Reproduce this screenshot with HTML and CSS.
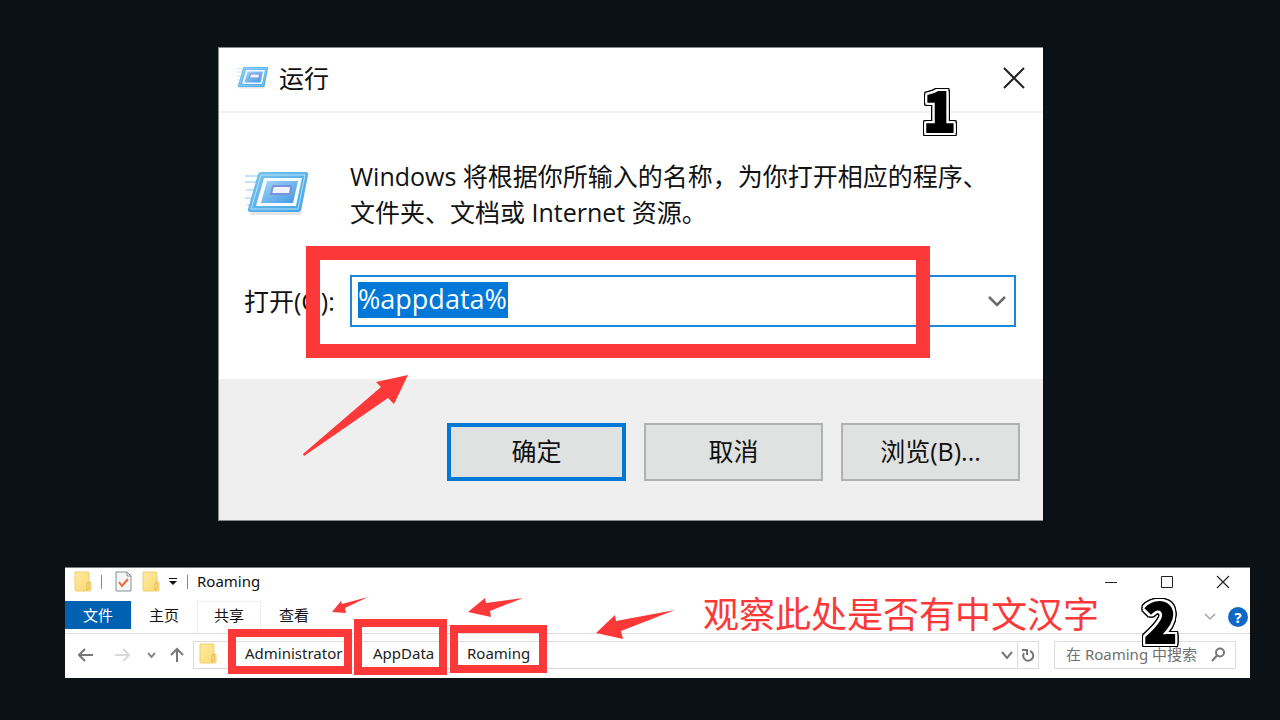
FILE: index.html
```html
<!DOCTYPE html>
<html lang="zh-CN">
<head>
<meta charset="utf-8">
<title>运行 %appdata%</title>
<link rel="stylesheet" href="styles.css">
</head>
<body>
<svg class="defs" width="0" height="0" aria-hidden="true">
  <defs>
    <linearGradient id="runFrame" x1="0" y1="0" x2="1" y2="1">
      <stop offset="0" stop-color="#7cc4ec"/>
      <stop offset="1" stop-color="#3fa3ea"/>
    </linearGradient>
    <linearGradient id="runCore" x1="0" y1="0" x2="1" y2="1">
      <stop offset="0" stop-color="#a5d5f3"/>
      <stop offset="1" stop-color="#3f97e6"/>
    </linearGradient>
    <linearGradient id="folderFill" x1="0" y1="0" x2="1" y2="1">
      <stop offset="0" stop-color="#ffeaa2"/>
      <stop offset="1" stop-color="#fbd96f"/>
    </linearGradient>
    <symbol id="run" viewBox="0 0 68 52">
      <path d="M1 8h14M1 14h12M2 22h9M1 30h8M3 37h4" stroke="#8fcbf0" stroke-width="2" opacity=".5"/>
      <path d="M18 7h46l-7 40H6z" fill="#000" opacity=".1"/>
      <path d="M17 4h45q3 0 2 3l-7 35q-1 2-3 2H6q-3 0-2-3L14 6q1-2 3-2z" fill="url(#runFrame)"/>
      <path d="M17 7h44l-7 34H7z" fill="none" stroke="#b5e2fa" stroke-width="1"/>
      <path d="M20 10h38l-6 28H12z" fill="#f5fbff"/>
      <path d="M23 13h31l-5 22H17z" fill="url(#runCore)"/>
      <path d="M29 18h18l-1 8H27z" fill="#f0f3ff" stroke="#7c91dc" stroke-width="2" stroke-linejoin="round"/>
    </symbol>
    <symbol id="folder" viewBox="0 0 18 21">
      <path d="M1 1h13q1 0 1 1v9h1q1 0 1 1v7q0 1-1 1H2q-1 0-1-1z" fill="url(#folderFill)" stroke="#f0cf70" stroke-width="1"/>
      <path d="M13 19v-6q0-2 2-2v6z" fill="#fff0b8" stroke="#dfb650" stroke-width="1"/>
    </symbol>
  </defs>
</svg>
<main class="stage">
  <section class="dialog">
    <header class="dialog-title">
      <svg class="title-icon"><use href="#run"/></svg>
      <h1 class="dialog-name">运行</h1>
      <button class="close" type="button" aria-label="关闭">
        <svg width="24" height="24" viewBox="0 0 24 24"><path d="M2 2l20 20M22 2L2 22" stroke="#222" stroke-width="2"/></svg>
      </button>
    </header>
    <form class="run-form">
      <div class="dialog-body">
        <svg class="run-icon"><use href="#run"/></svg>
        <p class="message">Windows 将根据你所输入的名称，为你打开相应的程序、<br>文件夹、文档或 Internet 资源。</p>
        <label class="open-label" for="open">打开(O):</label>
        <div class="combo">
          <input class="combo-input" id="open" type="text" value="%appdata%">
          <button class="combo-toggle" type="button" aria-label="展开列表">
            <svg width="20" height="14" viewBox="0 0 20 14"><path d="M2 3l8 8 8-8" fill="none" stroke="#6b6b6b" stroke-width="2.500"/></svg>
          </button>
        </div>
      </div>
      <div class="dialog-actions">
        <button class="action action-default" type="button">确定</button>
        <button class="action" type="button">取消</button>
        <button class="action" type="button">浏览(B)...</button>
      </div>
    </form>
    <div class="mark mark-input"></div>
    <svg class="arrow-dialog" width="110" height="86" viewBox="0 0 110 86"><path d="M106 1L74 8l5 5L1 80l1 2 84-58 6 6z" fill="#fd3838"/></svg>
    <span class="step step-one">1</span>
  </section>

  <section class="explorer">
    <header class="explorer-title">
      <svg class="folder"><use href="#folder"/></svg>
      <span class="divider"></span>
      <svg class="sheet" width="17" height="21" viewBox="0 0 17 21">
        <path d="M1 1h11l4 4v15H1z" fill="#f4f6f8" stroke="#8a8d91"/>
        <path d="M12 1v4h4" fill="none" stroke="#8a8d91"/>
        <path d="M4 11l3 4 6-7" fill="none" stroke="#ee6a35" stroke-width="2"/>
      </svg>
      <svg class="folder"><use href="#folder"/></svg>
      <svg class="quick" width="10" height="9" viewBox="0 0 10 9"><path d="M1 1.500h8" stroke="#111" stroke-width="1"/><path d="M1 4h8L5 8z" fill="#111"/></svg>
      <span class="divider"></span>
      <h2 class="explorer-name">Roaming</h2>
      <div class="window-buttons">
        <button class="plain" type="button" aria-label="最小化"><svg width="14" height="14" viewBox="0 0 14 14"><path d="M1 7.500h12" stroke="#222"/></svg></button>
        <button class="plain" type="button" aria-label="最大化"><svg width="14" height="14" viewBox="0 0 14 14"><path d="M1.500 1.500h11v11h-11z" fill="none" stroke="#222"/></svg></button>
        <button class="plain" type="button" aria-label="关闭"><svg width="14" height="14" viewBox="0 0 14 14"><path d="M1 1l12 12M13 1L1 13" stroke="#222" stroke-width="1.200"/></svg></button>
      </div>
    </header>
    <nav class="tabs">
      <button class="tab tab-file" type="button">文件</button>
      <button class="tab" type="button">主页</button>
      <button class="tab tab-hover" type="button">共享</button>
      <button class="tab" type="button">查看</button>
      <div class="tab-tools">
        <button class="plain" type="button" aria-label="展开功能区"><svg width="12" height="8" viewBox="0 0 12 8"><path d="M1 1l5 5 5-5" fill="none" stroke="#a4a4a4" stroke-width="1.500"/></svg></button>
        <button class="help" type="button" aria-label="帮助">?</button>
      </div>
    </nav>
    <div class="address-row">
      <div class="history">
        <button class="plain" type="button" aria-label="后退"><svg width="16" height="14" viewBox="0 0 16 14"><path d="M15 7H2M7 1L1 7l6 6" fill="none" stroke="#777" stroke-width="2"/></svg></button>
        <button class="plain" type="button" aria-label="前进"><svg width="16" height="14" viewBox="0 0 16 14"><path d="M1 7h13M9 1l6 6-6 6" fill="none" stroke="#d9d9d9" stroke-width="2"/></svg></button>
        <button class="plain plain-small" type="button" aria-label="最近位置"><svg width="9" height="7" viewBox="0 0 9 7"><path d="M1 1l3.500 4L8 1" fill="none" stroke="#888" stroke-width="2"/></svg></button>
        <button class="plain" type="button" aria-label="上移"><svg width="16" height="16" viewBox="0 0 16 16"><path d="M8 15V2M2 8l6-6 6 6" fill="none" stroke="#777" stroke-width="2"/></svg></button>
      </div>
      <div class="address">
        <svg class="folder"><use href="#folder"/></svg>
        <a class="crumb crumb-user" href="#admin">Administrator</a>
        <a class="crumb crumb-data" href="#appdata">AppData</a>
        <a class="crumb" href="#roaming">Roaming</a>
        <button class="plain address-open" type="button" aria-label="历史地址"><svg width="12" height="9" viewBox="0 0 12 9"><path d="M1 1l5 6 5-6" fill="none" stroke="#777" stroke-width="2"/></svg></button>
        <button class="refresh" type="button" aria-label="刷新"><svg width="14" height="15" viewBox="0 0 14 15"><path d="M9 3a5 5 0 1 1-6 2" fill="none" stroke="#777" stroke-width="2"/><path d="M1 2h5v5" fill="none" stroke="#777" stroke-width="2"/></svg></button>
      </div>
      <label class="search">
        <input class="search-input" type="text" placeholder="在 Roaming 中搜索" aria-label="搜索">
        <svg width="15" height="15" viewBox="0 0 15 15"><circle cx="9" cy="5.500" r="4" fill="none" stroke="#777" stroke-width="2"/><path d="M6 8.500L1 14" stroke="#777" stroke-width="2"/></svg>
      </label>
    </div>
    <div class="mark mark-user"></div>
    <div class="mark mark-data"></div>
    <div class="mark mark-roaming"></div>
    <svg class="arrows" width="346" height="46" viewBox="0 0 346 46" fill="#fd3838">
      <path d="M1 15L10 4l1 3 26-7-23 11 1 5z"/>
      <path d="M137 15l17-14 1 5 37-5-33 13 1 6z"/>
      <path d="M265 36l19-18 1 6 59-11-54 21 2 8z"/>
    </svg>
    <p class="note">观察此处是否有中文汉字</p>
    <span class="step step-two">2</span>
  </section>
</main>
</body>
</html>
```

FILE: styles.css
```css
* {
  box-sizing: border-box;
}

body {
  margin: 0;
  background: #0b1114;
  color: #111;
  font-family: "Noto Sans", "Noto Sans CJK SC", sans-serif;
}

button,
input {
  font: inherit;
  color: inherit;
  border: 0;
  margin: 0;
  padding: 0;
  background: none;
}

h1,
h2,
p {
  margin: 0;
  font-weight: 400;
}

.defs {
  position: absolute;
}

.stage {
  display: flex;
  flex-direction: column;
  gap: 46px;
  padding: 47px 30px 42px 65px;
}

/* Run dialog */
.dialog {
  position: relative;
  margin: 0 207px 0 153px;
  border: 1px solid #858a8c;
  border-right: 0;
  background: #fff;
  font-family: "Open Sans", "Noto Sans CJK SC", sans-serif;
  font-size: 25px;
  line-height: 36px;
}

.dialog-title {
  display: flex;
  align-items: center;
  height: 65px;
  padding: 0 17px 4px;
  border-bottom: 2px solid #f2f2f2;
}

.title-icon {
  width: 34px;
  height: 26px;
}

.dialog-name {
  margin-left: 9px;
  font-size: 25px;
}

.close {
  display: flex;
  margin-left: auto;
}

.dialog-body {
  display: grid;
  grid-template-columns: 106px 1fr;
  row-gap: 45px;
  align-items: center;
  padding: 45px 27px 52px 25px;
}

.run-icon {
  width: 68px;
  height: 52px;
}

.message {
  white-space: nowrap;
}

.combo {
  display: flex;
  align-items: center;
  height: 52px;
  padding: 0 7px 3px 6px;
  border: 2px solid #1c87dc;
}

.combo-input {
  width: 150px;
  height: 36px;
  padding: 0 0 2px;
  background: #0078d7;
  color: #fff;
  font-size: 27px;
}

.combo-toggle {
  display: flex;
  margin-left: auto;
  padding-top: 3px;
}

.dialog-actions {
  display: flex;
  justify-content: flex-end;
  gap: 18px;
  padding: 44px 23px 39px;
  background: #efefef;
}

.action {
  width: 179px;
  height: 58px;
  padding-bottom: 2px;
  border: 2px solid #b0b2b1;
  background: #e0e2e1;
}

.action-default {
  border: 4px solid #0078d7;
}

/* Explorer window */
.explorer {
  position: relative;
  border-top: 1px solid #777b7d;
  background: #fff;
  font-size: 15px;
  line-height: 20px;
}

.explorer-title {
  display: flex;
  align-items: center;
  height: 33px;
  padding: 0 20px 6px 9px;
}

.folder {
  flex: none;
  width: 18px;
  height: 21px;
}

.divider {
  width: 1px;
  height: 14px;
  margin: 0 9px;
  background: #888;
}

.sheet {
  margin: 0 10px 0 4px;
}

.quick {
  margin-left: 8px;
}

.explorer-name {
  padding-bottom: 2px;
  font-size: 15px;
}

.window-buttons {
  display: flex;
  gap: 42px;
  margin-left: auto;
}

.plain {
  display: flex;
  align-items: center;
  justify-content: center;
}

.tabs {
  display: flex;
  height: 33px;
  border-bottom: 1px solid #ddd;
}

.tab {
  width: 66px;
  height: 28px;
}

.tab-file {
  background: #0060b1;
  color: #fff;
}

.tab-hover {
  width: 64px;
  height: 32px;
  padding-bottom: 5px;
  border: 1px solid #eee;
  border-bottom: 0;
}

.tab-tools {
  display: flex;
  align-items: center;
  gap: 12px;
  margin-left: auto;
  padding-right: 2px;
}

.help {
  width: 20px;
  height: 20px;
  border-radius: 50%;
  background: #1068c4;
  color: #fff;
  font-weight: 700;
}

.address-row {
  display: flex;
  padding: 7px 14px 9px 13px;
}

.history {
  display: flex;
  align-items: center;
  gap: 20px;
  width: 115px;
}

.plain-small {
  margin: 0 -7px 0 -3px;
}

.address {
  display: flex;
  flex: 1;
  align-items: center;
  height: 28px;
  padding: 0 0 3px 5px;
  border: 1px solid #dcdcdc;
}

.crumb {
  padding-bottom: 2px;
  color: #222;
  text-decoration: none;
}

.crumb-user {
  width: 128px;
  margin-left: 28px;
}

.crumb-data {
  width: 94px;
}

.crumb-user,
.crumb-data {
  flex: none;
}

.address-open {
  margin-left: auto;
  padding-top: 3px;
}

.refresh {
  display: flex;
  flex: none;
  align-items: center;
  justify-content: center;
  align-self: flex-start;
  width: 21px;
  height: 26px;
  margin-left: 4px;
  border-left: 1px solid #dcdcdc;
}

.search {
  display: flex;
  align-items: center;
  width: 182px;
  height: 28px;
  margin-left: 15px;
  padding: 0 9px 2px 11px;
  border: 1px solid #dcdcdc;
}

.search-input {
  flex: 1;
  min-width: 0;
}

.search-input::placeholder {
  color: #707070;
}

/* Annotations drawn over the windows */
.mark {
  position: absolute;
  border: 8px solid #fd3838;
  pointer-events: none;
}

.mark-input {
  top: 198px;
  left: 87px;
  right: 113px;
  height: 112px;
  border-width: 14px;
}

.mark-user {
  top: 61px;
  left: 163px;
  width: 124px;
  height: 45px;
}

.mark-data {
  top: 51px;
  left: 289px;
  width: 93px;
  height: 56px;
}

.mark-roaming {
  top: 57px;
  left: 385px;
  width: 97px;
  height: 48px;
}

.arrow-dialog {
  position: absolute;
  top: 326px;
  left: 83px;
}

.arrows {
  position: absolute;
  top: 29px;
  left: 266px;
}

.note {
  position: absolute;
  top: 23px;
  left: 638px;
  color: #fd3838;
  font-size: 36px;
  line-height: 48px;
  white-space: nowrap;
}

.step {
  position: absolute;
  color: #000;
  font-family: "Noto Sans CJK SC", sans-serif;
  font-size: 54px;
  font-weight: 900;
  line-height: 54px;
  -webkit-text-stroke: 2px #000;
  filter:
    drop-shadow(2px 0 0 #fff) drop-shadow(-2px 0 0 #fff)
    drop-shadow(0 2px 0 #fff) drop-shadow(0 -2px 0 #fff)
    drop-shadow(1px 0 0 #000) drop-shadow(-1px 0 0 #000)
    drop-shadow(0 1px 0 #000) drop-shadow(0 -1px 0 #000);
}

.step-one {
  top: 34px;
  right: 87px;
}

.step-two {
  top: 25px;
  right: 73px;
}
```
